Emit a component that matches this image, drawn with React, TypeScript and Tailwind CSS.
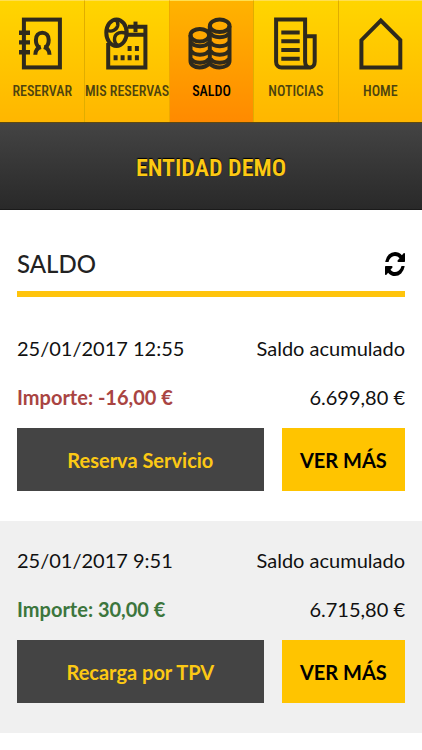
import React from 'react';

const movements = [
  { date: '25/01/2017 12:55', amount: '-16,00 €', color: 'text-[#a94442]', total: '6.699,80 €', concept: 'Reserva Servicio' },
  { date: '25/01/2017 9:51', amount: '30,00 €', color: 'text-[#3c763d]', total: '6.715,80 €', concept: 'Recarga por TPV' },
];

function Icon({ children }: { children: React.ReactNode }) {
  return (
    <svg viewBox="0 0 46 54" fill="none" stroke="#2f2a1c" strokeWidth="4" className="h-[54px] w-[46px]" aria-hidden="true">
      {children}
    </svg>
  );
}

const BookIcon = () => (
  <Icon>
    <rect x="4.9" y="3.6" width="36" height="47.8" />
    <path d="M0 16.7h11M0 26.4h11M0 36.3h11" strokeWidth="4.4" />
    <path d="M20.2 31.2C17.5 29.6 16.9 26.8 16.9 23.9c0-4.3 2.6-7.2 6.4-7.2s6.4 2.9 6.4 7.2c0 2.9-.6 5.7-3.3 7.3" />
    <path d="M16.3 38.8c0-4.2 2-6.8 5.6-7.8M30.5 38.8c0-4.2-2-6.8-5.6-7.8" />
  </Icon>
);

const CalendarIcon = () => (
  <Icon>
    <path d="M4.2 27v24.5h37.2V10.8H24M23 18.8h18.4" />
    <path d="M31.5 5.6v10.6" />
    <ellipse cx="12.5" cy="16.7" rx="10.2" ry="13.3" />
    <path d="M2.6 14.2c5.6 2.6 10.2-.6 11.2-4.9.4-2.3-.4-4.3-2.4-5.7M22.4 17.4c-5.4-2.1-10.7-.6-11.7 4.1-.6 2.8.2 5.5 2.4 7.6" strokeWidth="3.4" />
    <path d="M23.6 32.4h4M30.9 32.4h4M9.6 41.7h4M16.6 41.7h4M23.6 41.7h4M30.9 41.7h4" strokeWidth="5" />
  </Icon>
);

const CoinsIcon = () => (
  <Icon>
    <path d="M2.5 19v26c0 3.8 3.8 6.5 9 6.5 4.3 0 7-1.3 10-4 3 2.7 6 4 10 4 5.7 0 10-2.7 10-6.5V10" />
    <path d="M21.8 10v37" />
    <ellipse cx="31.7" cy="9.8" rx="9.8" ry="6.3" />
    <ellipse cx="11.8" cy="19.2" rx="9.3" ry="6.3" />
    <path d="M22.5 17c2.5 5.5 16 5.5 18.5 0M22.5 26c2.5 5.5 16 5.5 18.5 0M22.5 34.5c2.5 5.5 16 5.5 18.5 0M22.5 42.5c2.5 5.5 16 5.5 18.5 0" />
    <path d="M3 26c2.5 5.5 15.5 5.5 18 0M3 34.5c2.5 5.5 15.5 5.5 18 0M3 42.5c2.5 5.5 15.5 5.5 18 0" />
  </Icon>
);

const NewsIcon = () => (
  <Icon>
    <path d="M38 51.5H8.5c-3.2 0-5.4-2.2-5.4-5.8V3.6h29v41.9c0 3.6 2 6 4.9 6s4.7-2.4 4.7-6V20.2h-9" />
    <path d="M8.3 16.5h18.4M8.3 25.3h18.4M8.3 34h18.4M8.3 42.7h18.4" />
  </Icon>
);

const HomeIcon = () => (
  <Icon>
    <path d="M4.4 51.5V24.2L23.8 4.6l19.5 19.6v27.3z" />
  </Icon>
);

const tabs = [
  { label: 'RESERVAR', icon: BookIcon },
  { label: 'MIS RESERVAS', icon: CalendarIcon },
  { label: 'SALDO', icon: CoinsIcon, active: true },
  { label: 'NOTICIAS', icon: NewsIcon },
  { label: 'HOME', icon: HomeIcon },
];

export default function App() {
  return (
    <div className="min-h-screen bg-white font-['Lato',sans-serif] text-[#111111]">
      <nav className="grid grid-cols-5 border-b border-[#5e4a12] font-['Roboto_Condensed','Roboto',sans-serif]">
        {tabs.map(({ label, icon: TabIcon, active }) => (
          <a
            key={label}
            href="#"
            aria-current={active ? 'page' : undefined}
            className={`flex h-[122px] flex-col items-center border-t border-l border-t-[#ffdf50] pt-[15px] whitespace-nowrap first:border-l-0 ${
              active
                ? 'border-l-[#f0a800] bg-linear-to-b from-[#ffb300] to-[#ff8a00] text-black'
                : 'border-l-[#e0ad00] bg-linear-to-b from-[#ffd500] to-[#ffb600] text-[#4d430f]'
            }`}
          >
            <TabIcon />
            <span className="mt-3 text-[14px] leading-[18px] font-medium">{label}</span>
          </a>
        ))}
      </nav>

      <header className="flex h-[87px] items-center justify-center border-b border-[#1a1a1a] bg-linear-to-b from-[#444444] to-[#292929] pt-1">
        <h1 className="font-['Roboto_Condensed','Roboto',sans-serif] text-[24px] leading-[28px] font-semibold text-[#fcc914] [text-shadow:0_-1px_1px_#000]">
          ENTIDAD DEMO
        </h1>
      </header>

      <main>
        <div className="mx-[17px] mb-3 flex items-center justify-between border-b-6 border-[#ffc40c] pt-9 pb-[9px]">
          <h2 className="text-[24px] leading-[36px] font-medium text-[#222222]">SALDO</h2>
          <button type="button" aria-label="Actualizar" className="text-black">
            <svg viewBox="0 0 1536 1536" preserveAspectRatio="none" fill="currentColor" className="h-6 w-5">
              <path d="M1511 928q0 5-1 7-64 268-268 434.5t-478 166.5q-146 0-282.5-55t-243.5-157l-129 129q-19 19-45 19t-45-19-19-45v-448q0-26 19-45t45-19h448q26 0 45 19t19 45-19 45l-137 137q71 66 161 102t187 36q134 0 250-65t186-179q11-17 53-117 8-23 30-23h192q13 0 22.5 9.5t9.5 22.5zm25-800v448q0 26-19 45t-45 19h-448q-26 0-45-19t-19-45 19-45l138-138q-148-137-349-137-134 0-250 65t-186 179q-11 17-53 117-8 23-30 23h-199q-13 0-22.5-9.5t-9.5-22.5v-7q65-268 270-434.5t480-166.5q146 0 284 55.5t245 156.5l130-129q19-19 45-19t45 19 19 45z" />
            </svg>
          </button>
        </div>

        <ul>
          {movements.map((m) => (
            <li key={m.date} className="px-[17px] pt-[25px] pb-[30px] text-[20px] leading-[28px] even:bg-[#f0f0f0]">
              <div className="flex justify-between">
                <span>{m.date}</span>
                <span>Saldo acumulado</span>
              </div>
              <div className="mt-[21px] flex justify-between">
                <span className={`font-bold ${m.color}`}>Importe: {m.amount}</span>
                <span>{m.total}</span>
              </div>
              <div className="mt-[17px] grid grid-cols-[2fr_1fr] gap-[18px] font-bold">
                <button type="button" className="h-[63px] bg-[#444444] text-[#fcc914]">{m.concept}</button>
                <button type="button" className="h-[63px] bg-[#ffc400] text-black">VER MÁS</button>
              </div>
            </li>
          ))}
        </ul>
      </main>
    </div>
  );
}
